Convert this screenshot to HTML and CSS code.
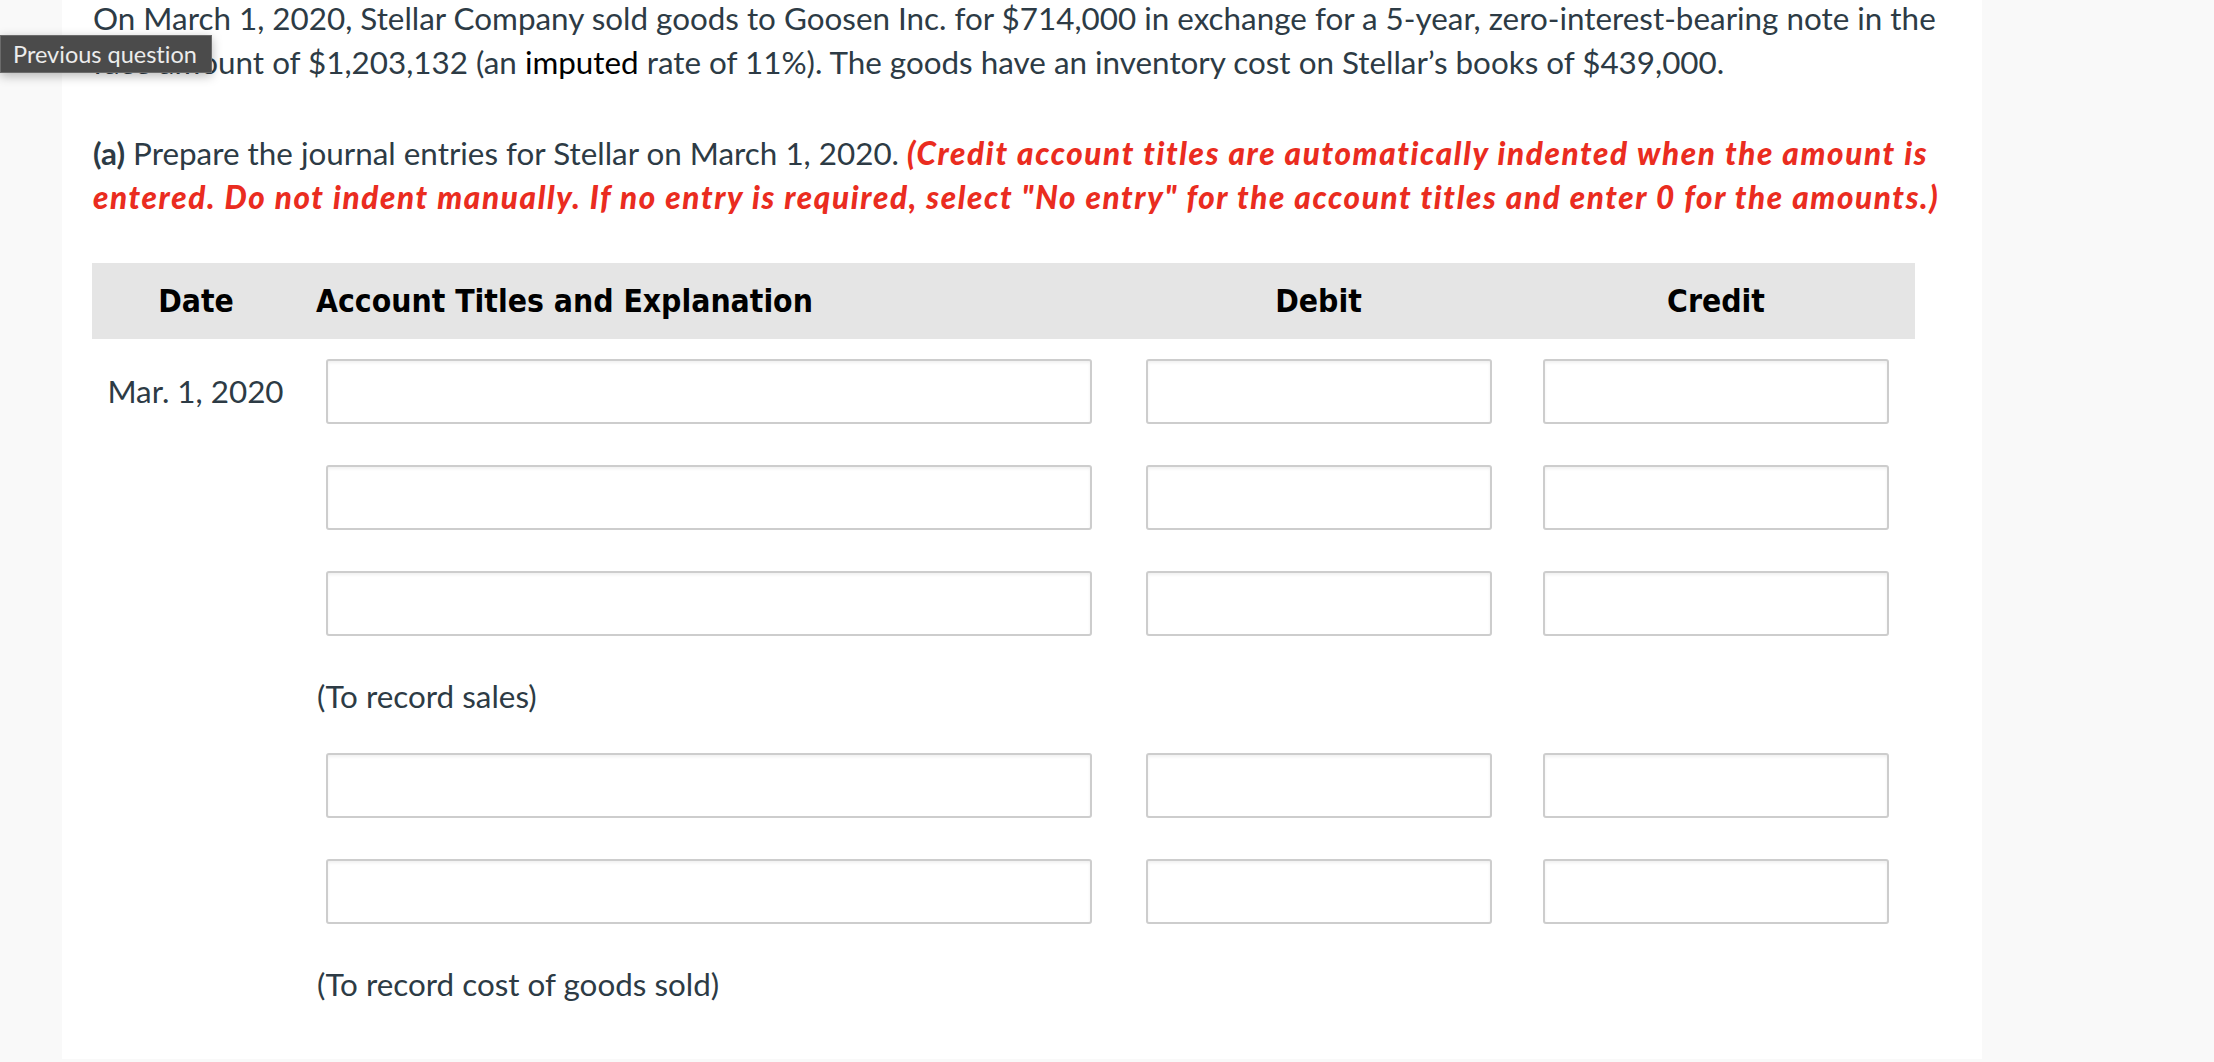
FILE: index.html
```html
<!DOCTYPE html>
<html>
<head>
<meta charset="utf-8">
<link rel="stylesheet" href="styles.css">
</head>
<body>
<div class="page">
  <div class="tooltip">Previous question</div>
  <p class="para intro">On March 1, 2020, Stellar Company sold goods to Goosen Inc. for $714,000 in exchange for a 5-year, zero-interest-bearing note in the face amount of $1,203,132 (an <span class="term">imputed</span> rate of 11%). The goods have an inventory cost on Stellar’s books of $439,000.</p>
  <p class="para"><b class="part">(a)</b> Prepare the journal entries for Stellar on March 1, 2020. <span class="warn">(Credit account titles are automatically indented when the amount is entered. Do not indent manually. If no entry is required, select "No entry" for the account titles and enter 0 for the amounts.)</span></p>

  <div class="journal">
    <div class="head">
      <div class="c-date">Date</div>
      <div class="c-acct">Account Titles and Explanation</div>
      <div class="c-amt">Debit</div>
      <div class="c-amt">Credit</div>
    </div>
    <div class="row">
      <div class="c-date date-text">Mar. 1, 2020</div>
      <div class="c-acct"><div class="box acct-box"></div></div>
      <div class="c-amt"><div class="box amt-box"></div></div>
      <div class="c-amt"><div class="box amt-box"></div></div>
    </div>
    <div class="row">
      <div class="c-date"></div>
      <div class="c-acct"><div class="box acct-box"></div></div>
      <div class="c-amt"><div class="box amt-box"></div></div>
      <div class="c-amt"><div class="box amt-box"></div></div>
    </div>
    <div class="row">
      <div class="c-date"></div>
      <div class="c-acct"><div class="box acct-box"></div></div>
      <div class="c-amt"><div class="box amt-box"></div></div>
      <div class="c-amt"><div class="box amt-box"></div></div>
    </div>
    <div class="note-row">
      <div class="c-date"></div>
      <div class="c-acct note">(To record sales)</div>
    </div>
    <div class="row">
      <div class="c-date"></div>
      <div class="c-acct"><div class="box acct-box"></div></div>
      <div class="c-amt"><div class="box amt-box"></div></div>
      <div class="c-amt"><div class="box amt-box"></div></div>
    </div>
    <div class="row">
      <div class="c-date"></div>
      <div class="c-acct"><div class="box acct-box"></div></div>
      <div class="c-amt"><div class="box amt-box"></div></div>
      <div class="c-amt"><div class="box amt-box"></div></div>
    </div>
    <div class="note-row">
      <div class="c-date"></div>
      <div class="c-acct note">(To record cost of goods sold)</div>
    </div>
  </div>
</div>
</body>
</html>
```
FILE: styles.css
```css
html, body {
  margin: 0;
  padding: 0;
  background: #f9f9f9;
}
body {
  font-family: Lato, "Liberation Sans", sans-serif;
  color: #2d3b45;
  overflow: hidden;
  font-variant-ligatures: none;
}
.page {
  position: relative;
  margin-left: 62px;
  width: 1920px;
  min-height: 1062px;
  background: #fff;
  padding: 0 16px 0 31px;
  box-sizing: border-box;
}
.para {
  margin: 0 0 44px 0;
  font-size: 31.4px;
  line-height: 43.5px;
}
.intro {
  margin-top: -3px;
  margin-bottom: 48px;
}
.term {
  color: #000;
}
.part {
  font-weight: 700;
}
.warn {
  color: #ea2c20;
  font-weight: 900;
  font-style: italic;
  letter-spacing: 1.65px;
}
.tooltip {
  position: absolute;
  left: -62px;
  top: 38px;
  width: 212px;
  height: 38px;
  box-sizing: border-box;
  background: #4b4b4b;
  border: 1px solid #6b6b6b;
  color: #ececec;
  font-size: 23.5px;
  line-height: 36px;
  padding-left: 12px;
  white-space: nowrap;
  box-shadow: 0 3px 10px rgba(0, 0, 0, 0.28);
  z-index: 5;
}
.journal {
  margin-top: 1px;
  width: 1823px;
  margin-left: -1px;
}
.head, .row, .note-row {
  display: grid;
  grid-template-columns: 224px 804px 397px 398px;
}
.head {
  height: 76px;
  background: #e5e5e5;
  align-items: center;
  color: #000;
  font-family: "DejaVu Sans Condensed", "DejaVu Sans", sans-serif;
  font-stretch: condensed;
  font-weight: 700;
  font-size: 31.6px;
}
.head .c-date {
  text-align: center;
  padding-right: 16px;
}
.head .c-amt {
  text-align: center;
}
.row {
  height: 106px;
  box-sizing: border-box;
  padding-top: 20px;
  align-items: start;
}
.date-text {
  font-size: 31.4px;
  line-height: 65px;
  text-align: center;
  padding-right: 17px;
}
.c-amt {
  display: flex;
  justify-content: center;
}
.head .c-amt {
  display: block;
}
.box {
  height: 65px;
  box-sizing: border-box;
  border: 2px solid #cdcdcd;
  border-radius: 3px;
  background: #fff;
  box-shadow: inset 0 2px 3px rgba(0, 0, 0, 0.06);
}
.acct-box {
  margin-left: 10px;
  width: 766px;
}
.amt-box {
  width: 346px;
}
.note-row {
  height: 76px;
  align-items: center;
}
.note {
  font-size: 31.4px;
  line-height: 44px;
  padding-left: 1px;
  padding-top: 2px;
}
```
